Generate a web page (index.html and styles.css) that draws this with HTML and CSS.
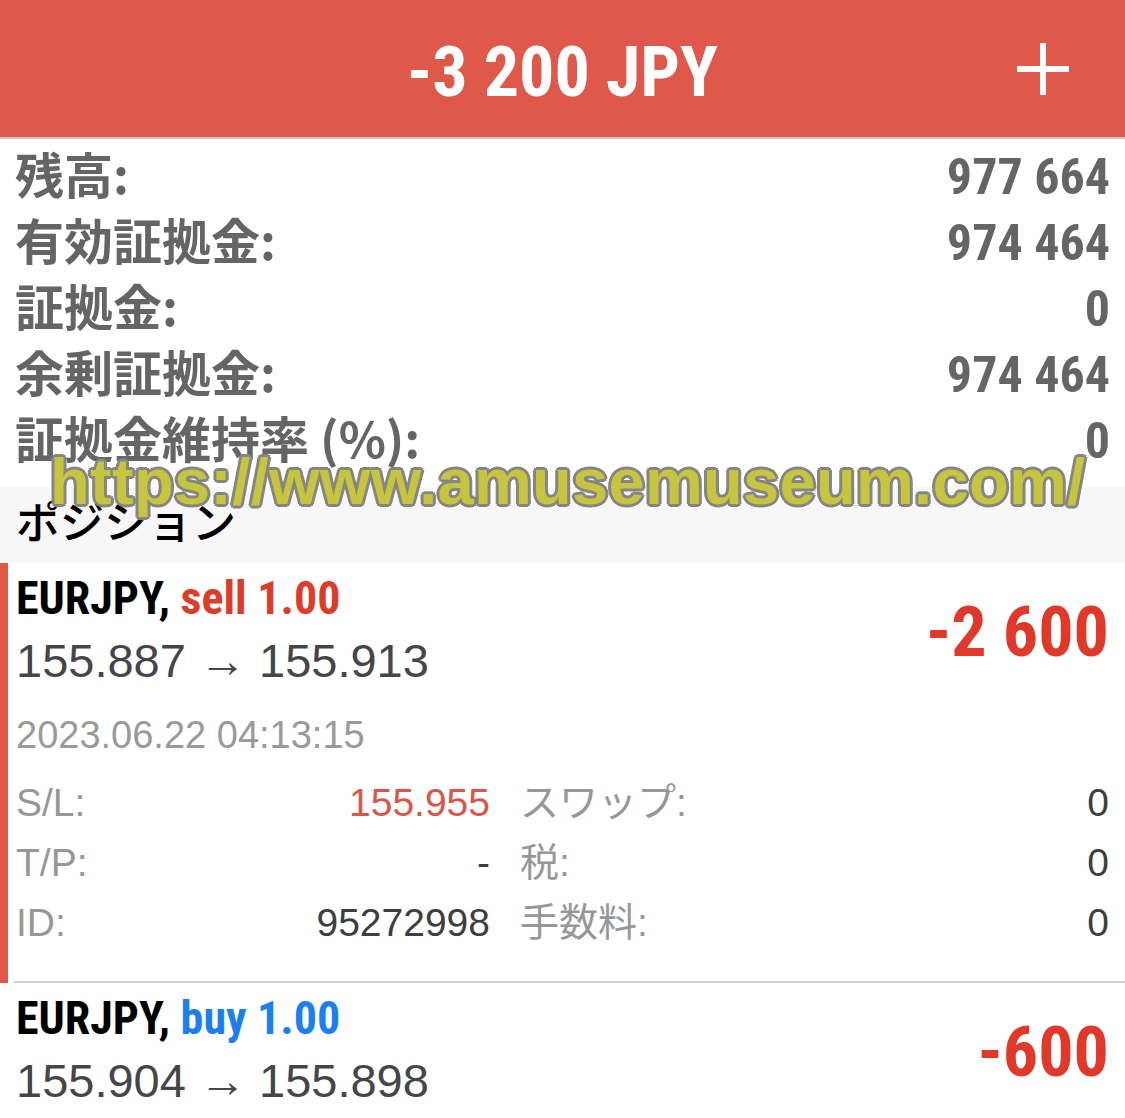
FILE: index.html
```html
<!DOCTYPE html>
<html lang="ja">
<head>
<meta charset="utf-8">
<title>Trade</title>
<link rel="stylesheet" href="styles.css">
</head>
<body>
<div class="app">
  <header class="topbar">
    <div class="topbar-side"></div>
    <div class="topbar-title">-3 200 JPY</div>
    <div class="topbar-side topbar-right">
      <svg class="plus" width="56" height="56" viewBox="0 0 56 56" aria-hidden="true">
        <path d="M28 2 V54 M2 28 H54" stroke="#ffffff" stroke-width="6" fill="none"/>
      </svg>
    </div>
  </header>

  <section class="summary">
    <div class="sum-row"><span class="sum-label">残高:</span><span class="sum-value">977 664</span></div>
    <div class="sum-row"><span class="sum-label">有効証拠金:</span><span class="sum-value">974 464</span></div>
    <div class="sum-row"><span class="sum-label">証拠金:</span><span class="sum-value">0</span></div>
    <div class="sum-row"><span class="sum-label">余剰証拠金:</span><span class="sum-value">974 464</span></div>
    <div class="sum-row"><span class="sum-label">証拠金維持率 (%):</span><span class="sum-value">0</span></div>
  </section>

  <div class="section-head">ポジション</div>

  <div class="position selected">
    <div class="pos-inner">
      <div class="pos-head">
        <div class="pos-main">
          <div class="pos-title">EURJPY, <span class="sell">sell 1.00</span></div>
          <div class="pos-price">155.887 → 155.913</div>
        </div>
        <div class="pos-profit">-2 600</div>
      </div>
      <div class="pos-date">2023.06.22 04:13:15</div>
      <div class="pos-details">
        <div class="det-cell"><span class="det-label">S/L:</span><span class="det-value red">155.955</span></div>
        <div class="det-cell"><span class="det-label">スワップ:</span><span class="det-value">0</span></div>
        <div class="det-cell"><span class="det-label">T/P:</span><span class="det-value">-</span></div>
        <div class="det-cell"><span class="det-label">税:</span><span class="det-value">0</span></div>
        <div class="det-cell"><span class="det-label">ID:</span><span class="det-value">95272998</span></div>
        <div class="det-cell"><span class="det-label">手数料:</span><span class="det-value">0</span></div>
      </div>
    </div>
  </div>

  <div class="position">
    <div class="pos-inner">
      <div class="pos-head">
        <div class="pos-main">
          <div class="pos-title">EURJPY, <span class="buy">buy 1.00</span></div>
          <div class="pos-price">155.904 → 155.898</div>
        </div>
        <div class="pos-profit">-600</div>
      </div>
    </div>
  </div>

  <div class="watermark">https://www.amusemuseum.com/</div>
</div>
</body>
</html>
```

FILE: styles.css
```css
html, body {
  margin: 0;
  padding: 0;
  background: #ffffff;
}
body {
  width: 1125px;
  height: 1118px;
  overflow: hidden;
  font-family: "Liberation Sans", Arial, sans-serif;
}
.app {
  position: relative;
  width: 1125px;
}

/* header */
.topbar {
  box-sizing: border-box;
  height: 139px;
  padding-top: 7px;
  background: #df584a;
  border-bottom: 2px solid #c9c9c9;
  display: grid;
  grid-template-columns: 1fr auto 1fr;
  align-items: center;
}
.topbar-title {
  font-family: "Liberation Sans Narrow", "Roboto Condensed", "DejaVu Sans Condensed", sans-serif;
  font-stretch: condensed;
  font-weight: 700;
  font-size: 70px;
  line-height: 72px;
  color: #ffffff;
  white-space: nowrap;
}
.topbar-right {
  display: flex;
  justify-content: flex-end;
  padding-right: 54px;
  margin-top: -6px;
}
.plus { display: block; }

/* summary */
.summary {
  padding: 1px 15px 17px 15px;
}
.sum-row {
  display: flex;
  justify-content: space-between;
  align-items: baseline;
  height: 66px;
  color: #656565;
}
.sum-label {
  font-family: "Noto Sans CJK JP", sans-serif;
  font-weight: 700;
  font-size: 49px;
  line-height: 66px;
  white-space: nowrap;
}
.sum-value {
  font-family: "Liberation Sans Narrow", "Roboto Condensed", "DejaVu Sans Condensed", sans-serif;
  font-stretch: condensed;
  font-weight: 700;
  font-size: 50px;
  line-height: 66px;
  white-space: nowrap;
}

/* section head */
.section-head {
  box-sizing: border-box;
  height: 76px;
  padding: 0 17px 8px 16px;
  background: #f7f7f7;
  font-family: "Noto Sans CJK JP", sans-serif;
  font-weight: 500;
  font-size: 44px;
  line-height: 66px;
  color: #000000;
}

/* positions */
.position {
  display: flex;
}
.position.selected {
  border-left: 8px solid #df584a;
}
.position .pos-inner {
  flex: 1;
  margin-left: 14px;
  padding: 6px 16px 0 2px;
}
.position.selected .pos-inner {
  margin-left: 6px;
  border-bottom: 2px solid #cfcfcf;
  padding-bottom: 28px;
}
.pos-head {
  display: flex;
  justify-content: space-between;
  align-items: center;
}
.pos-title {
  font-family: "Liberation Sans Narrow", "Roboto Condensed", "DejaVu Sans Condensed", sans-serif;
  font-stretch: condensed;
  font-weight: 700;
  font-size: 46px;
  line-height: 58px;
  color: #000000;
  white-space: nowrap;
}
.sell { color: #e03b29; }
.buy { color: #1a7ff1; }
.pos-price {
  font-size: 47px;
  line-height: 68px;
  color: #45454a;
  white-space: nowrap;
}
.pos-profit {
  font-family: "Liberation Sans Narrow", "Roboto Condensed", "DejaVu Sans Condensed", sans-serif;
  font-stretch: condensed;
  font-weight: 700;
  font-size: 70px;
  line-height: 72px;
  color: #e2382a;
  white-space: nowrap;
}
.pos-date {
  margin-top: 15px;
  font-size: 38px;
  line-height: 50px;
  color: #9a9a9a;
}
.pos-details {
  margin-top: 13px;
  display: grid;
  grid-template-columns: 474px 1fr;
  column-gap: 30px;
}
.det-cell {
  display: flex;
  justify-content: space-between;
  align-items: baseline;
  height: 60px;
  font-size: 39px;
  line-height: 60px;
}
.det-label {
  font-family: "Liberation Sans", "Noto Sans CJK JP", sans-serif;
  color: #979797;
}
.det-value {
  color: #3e3e42;
}
.det-value.red { color: #d9564a; }

/* watermark overlay */
.watermark {
  position: absolute;
  left: 50px;
  top: 449px;
  font-family: "Liberation Sans", Arial, sans-serif;
  font-weight: 700;
  font-size: 65px;
  line-height: 65px;
  letter-spacing: 0.3px;
  color: #c7c43e;
  white-space: nowrap;
  pointer-events: none;
  text-shadow:
    3px 0 0 #858585, -3px 0 0 #858585, 0 3px 0 #858585, 0 -3px 0 #858585,
    2px 2px 0 #858585, -2px 2px 0 #858585, 2px -2px 0 #858585, -2px -2px 0 #858585;
}
```
